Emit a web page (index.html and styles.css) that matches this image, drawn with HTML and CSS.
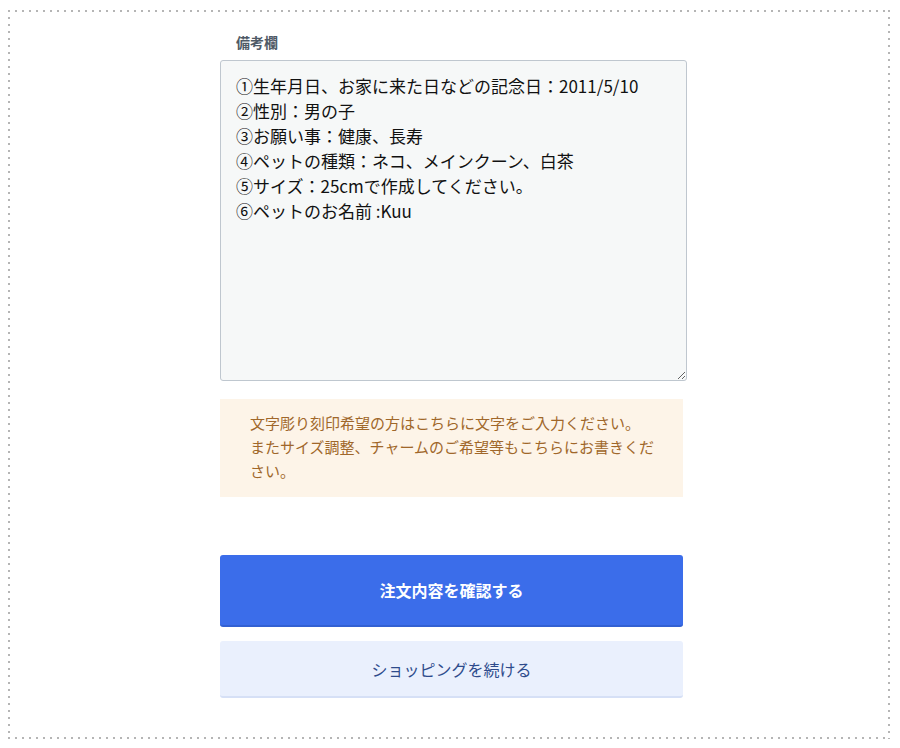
FILE: index.html
```html
<!DOCTYPE html>
<html lang="ja">
<head>
<meta charset="utf-8">
<link rel="stylesheet" href="styles.css">
</head>
<body>
<div class="page">
  <div class="column">
    <label class="label" for="memo">備考欄</label>
    <textarea id="memo" class="memo">①生年月日、お家に来た日などの記念日：2011/5/10
②性別：男の子
③お願い事：健康、長寿
④ペットの種類：ネコ、メインクーン、白茶
⑤サイズ：25cmで作成してください。
⑥ペットのお名前 :Kuu</textarea>
    <div class="note">文字彫り刻印希望の方はこちらに文字をご入力ください。<br>またサイズ調整、チャームのご希望等もこちらにお書きください。</div>
    <button class="btn btn-primary" type="button">注文内容を確認する</button>
    <button class="btn btn-secondary" type="button">ショッピングを続ける</button>
  </div>
</div>
</body>
</html>
```

FILE: styles.css
```css
html, body {
  margin: 0;
  padding: 0;
  background: #ffffff;
}
body {
  font-family: "Noto Sans CJK JP", "Noto Sans", sans-serif;
}
.page {
  box-sizing: border-box;
  margin: 10px 10px 0 8px;
  height: 729px;
  padding: 22px 2px 2px 2px;
  background:
    linear-gradient(to right, #b5b5b5 2px, transparent 2px) top left / 7px 2px repeat-x,
    linear-gradient(to right, #b5b5b5 2px, transparent 2px) bottom left / 7px 2px repeat-x,
    linear-gradient(to bottom, #b5b5b5 2px, transparent 2px) top left / 2px 7px repeat-y,
    linear-gradient(to bottom, #b5b5b5 2px, transparent 2px) top right / 2px 7px repeat-y,
    #ffffff;
}
.column {
  margin-left: 210px;
  width: 467px;
  display: flex;
  flex-direction: column;
}
.label {
  display: block;
  padding-left: 16px;
  font-size: 14px;
  line-height: 20px;
  font-weight: 700;
  color: #4f5a66;
  margin-bottom: 8px;
}
.memo {
  box-sizing: border-box;
  width: 467px;
  height: 321px;
  margin: 0;
  padding: 12px 15px;
  border: 1px solid #bfc7cf;
  border-radius: 3px;
  background: #f6f8f8;
  font-family: "Noto Sans CJK JP", sans-serif;
  font-size: 17px;
  line-height: 25px;
  color: #111111;
  resize: vertical;
  outline: none;
}
.note {
  box-sizing: border-box;
  width: 463px;
  margin-top: 18px;
  padding: 12px 20px 14px 30px;
  background: #fdf4e8;
  color: #a0672a;
  font-size: 15px;
  line-height: 24px;
}
.btn {
  box-sizing: border-box;
  width: 463px;
  margin: 0;
  border: none;
  border-radius: 3px;
  font-family: "Noto Sans CJK JP", sans-serif;
  font-size: 16px;
  cursor: pointer;
}
.btn-primary {
  margin-top: 58px;
  height: 72px;
  background: #3b6dea;
  border-bottom: 2px solid #3260d2;
  color: #ffffff;
  font-weight: 700;
}
.btn-secondary {
  margin-top: 14px;
  height: 57px;
  background: #eaf0fd;
  border-bottom: 2px solid #d6e0f6;
  color: #2e4b8c;
}
```
